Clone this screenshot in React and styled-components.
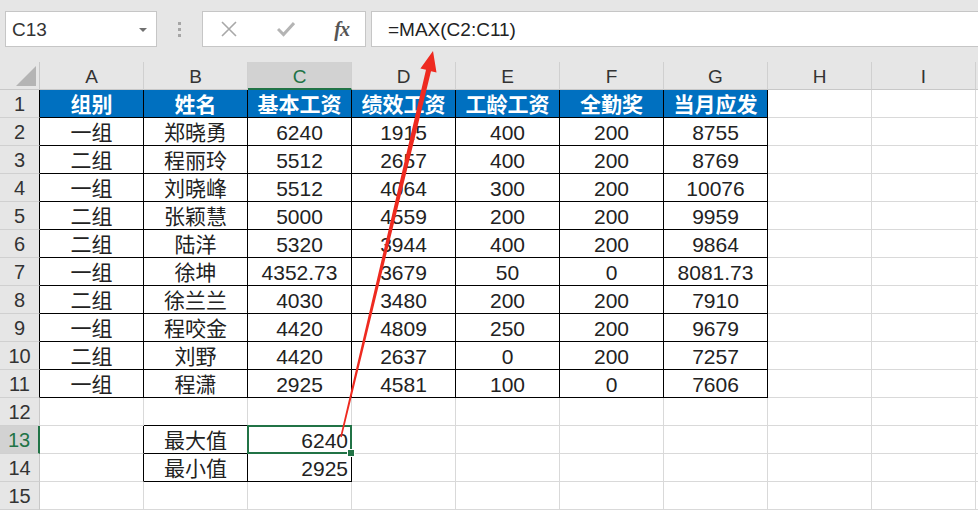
import React from 'react';
import styled, { createGlobalStyle, css } from 'styled-components';

const GlobalStyle = createGlobalStyle`
  html, body {
    margin: 0;
    padding: 0;
    background: #fff;
    overflow: hidden;
  }
  * {
    box-sizing: border-box;
  }
`;

const GREEN = '#217346';
const GRID = '#d9d9d9';

const Window = styled.div`
  position: relative;
  width: 978px;
  height: 511px;
  overflow: hidden;
  font-family: 'Liberation Sans', 'Noto Sans CJK SC', sans-serif;
  color: #222;
`;

const FormulaBar = styled.div`
  height: 62px;
  background: #e6e6e6;
  display: flex;
  align-items: flex-start;
  padding: 11px 0 0 5px;
`;

const NameBox = styled.div`
  width: 152px;
  height: 36px;
  background: #fff;
  border: 1px solid #c6c6c6;
  display: flex;
  align-items: center;
  justify-content: space-between;
  padding: 1px 9px 0 6px;
  font-size: 19px;
  color: #333;
`;

const Caret = styled.span`
  width: 0;
  height: 0;
  border-left: 4px solid transparent;
  border-right: 4px solid transparent;
  border-top: 4px solid #707070;
`;

const Grip = styled.div`
  width: 45px;
  height: 36px;
  display: flex;
  flex-direction: column;
  align-items: center;
  justify-content: center;
  gap: 3px;

  span {
    width: 3px;
    height: 3px;
    background: #a6a6a6;
  }
`;

const FuncBox = styled.div`
  width: 164px;
  height: 36px;
  background: #fff;
  border: 1px solid #c6c6c6;
  display: flex;
  align-items: center;
  justify-content: space-between;
  padding: 0 16px 0 18px;
`;

const Fx = styled.span`
  font-family: 'Liberation Serif', 'DejaVu Serif', serif;
  font-style: italic;
  font-weight: bold;
  font-size: 20px;
  color: #555;
  letter-spacing: -1px;
`;

const FormulaInput = styled.div`
  flex: 1;
  height: 36px;
  margin-left: 5px;
  background: #fff;
  border: 1px solid #c6c6c6;
  border-right: none;
  display: flex;
  align-items: center;
  padding: 1px 0 0 16px;
  font-size: 19px;
  color: #222;
`;

const Sheet = styled.div`
  display: grid;
  grid-template-columns: 40px repeat(9, 104px) 1fr;
  grid-auto-rows: 28px;
`;

const Corner = styled.div`
  background: #e6e6e6;
  border-right: 1px solid #c8c8c8;
  border-bottom: 1px solid #c8c8c8;
  display: flex;
  align-items: flex-end;
  justify-content: flex-end;
  padding: 0 3px 3px 0;

  &::after {
    content: '';
    width: 0;
    height: 0;
    border-left: 20px solid transparent;
    border-bottom: 20px solid #b4b4b4;
  }
`;

const ColHead = styled.div`
  background: ${({ $active }) => ($active ? '#d2d2d2' : '#e6e6e6')};
  color: ${({ $active }) => ($active ? GREEN : '#333')};
  border-right: 1px solid #d0d0d0;
  border-bottom: ${({ $active }) => ($active ? `2px solid ${GREEN}` : '1px solid #c8c8c8')};
  display: flex;
  align-items: center;
  justify-content: center;
  font-size: 19px;
  padding-top: 3px;
`;

const RowHead = styled.div`
  background: ${({ $active }) => ($active ? '#d2d2d2' : '#e6e6e6')};
  color: ${({ $active }) => ($active ? GREEN : '#333')};
  border-bottom: 1px solid #d0d0d0;
  border-right: ${({ $active, $edge }) =>
    $active ? `2px solid ${GREEN}` : $edge ? '1px solid #000' : '1px solid #c8c8c8'};
  display: flex;
  align-items: center;
  justify-content: center;
  font-size: 20px;
  padding-top: 2px;
`;

const Cell = styled.div`
  position: relative;
  border-right: 1px solid ${({ $right }) => ($right ? '#000' : GRID)};
  border-bottom: 1px solid ${({ $bottom }) => ($bottom ? '#000' : GRID)};
  display: flex;
  align-items: center;
  justify-content: ${({ $align }) => ($align === 'right' ? 'flex-end' : 'center')};
  padding: 2px 3px 0;
  font-size: 21px;
  white-space: nowrap;
  line-height: 25px;

  ${({ $title }) =>
    $title &&
    css`
      background: #0070c0;
      color: #fff;
      font-weight: bold;
    `}

  ${({ $selected }) =>
    $selected &&
    css`
      &::before {
        content: '';
        position: absolute;
        left: -1px;
        top: -1px;
        right: -1px;
        bottom: -1px;
        border: 2px solid ${GREEN};
        pointer-events: none;
      }
      &::after {
        content: '';
        position: absolute;
        right: -4px;
        bottom: -4px;
        width: 6px;
        height: 6px;
        background: ${GREEN};
        border: 1px solid #fff;
        z-index: 2;
      }
    `}
`;

const ArrowLayer = styled.svg`
  position: absolute;
  left: 0;
  top: 0;
  pointer-events: none;
  z-index: 5;
`;

const columns = ['A', 'B', 'C', 'D', 'E', 'F', 'G', 'H', 'I', ''];

const table = [
  ['组别', '姓名', '基本工资', '绩效工资', '工龄工资', '全勤奖', '当月应发'],
  ['一组', '郑晓勇', '6240', '1915', '400', '200', '8755'],
  ['二组', '程丽玲', '5512', '2657', '400', '200', '8769'],
  ['一组', '刘晓峰', '5512', '4064', '300', '200', '10076'],
  ['二组', '张颖慧', '5000', '4559', '200', '200', '9959'],
  ['二组', '陆洋', '5320', '3944', '400', '200', '9864'],
  ['一组', '徐坤', '4352.73', '3679', '50', '0', '8081.73'],
  ['二组', '徐兰兰', '4030', '3480', '200', '200', '7910'],
  ['一组', '程咬金', '4420', '4809', '250', '200', '9679'],
  ['二组', '刘野', '4420', '2637', '0', '200', '7257'],
  ['一组', '程潇', '2925', '4581', '100', '0', '7606'],
];

const summary = {
  13: ['', '最大值', '6240'],
  14: ['', '最小值', '2925'],
};

const cellFor = (row, col) => {
  const inTable = row <= 11 && col <= 6;
  const inSummary = (row === 13 || row === 14) && col >= 1 && col <= 2;
  let text = '';
  if (row <= 11 && col <= 6) text = table[row - 1][col];
  if (summary[row] && col <= 2) text = summary[row][col];

  return {
    text,
    title: row === 1 && col <= 6,
    right: inTable || inSummary || ((row === 13 || row === 14) && col === 0),
    bottom: inTable || inSummary || (row === 12 && (col === 1 || col === 2)),
    align: inSummary && col === 2 ? 'right' : 'center',
    selected: row === 13 && col === 2,
  };
};

const rows = Array.from({ length: 15 }, (_, i) => i + 1);

const App = () => {
  return (
    <Window>
      <GlobalStyle />

      <FormulaBar>
        <NameBox>
          <span>C13</span>
          <Caret />
        </NameBox>

        <Grip>
          <span />
          <span />
          <span />
        </Grip>

        <FuncBox>
          <svg width="16" height="16" viewBox="0 0 16 16">
            <path d="M1 1 L15 15 M15 1 L1 15" stroke="#a8a8a8" strokeWidth="1.6" fill="none" />
          </svg>
          <svg width="18" height="16" viewBox="0 0 18 16">
            <path d="M1 8 L6.5 13.5 L17 2" stroke="#b4b4b4" strokeWidth="3" fill="none" />
          </svg>
          <Fx>fx</Fx>
        </FuncBox>

        <FormulaInput>=MAX(C2:C11)</FormulaInput>
      </FormulaBar>

      <Sheet>
        <Corner />
        {columns.map((c, i) => (
          <ColHead key={i} $active={c === 'C'}>{c}</ColHead>
        ))}

        {rows.map(r => (
          <React.Fragment key={r}>
            <RowHead $active={r === 13} $edge={r <= 11}>{r}</RowHead>
            {columns.map((c, ci) => {
              const cell = cellFor(r, ci);
              return (
                <Cell
                  key={ci}
                  $title={cell.title}
                  $right={cell.right}
                  $bottom={cell.bottom}
                  $align={cell.align}
                  $selected={cell.selected}
                >
                  {cell.text}
                </Cell>
              );
            })}
          </React.Fragment>
        ))}
      </Sheet>

      <ArrowLayer width="978" height="511" viewBox="0 0 978 511">
        <polygon
          points="433,51 436.5,72.5 431,71.2 341.8,437.2 340.2,436.8 426,69.8 420.4,68.4"
          fill="#ee2a20"
        />
      </ArrowLayer>
    </Window>
  );
};

export default App;
